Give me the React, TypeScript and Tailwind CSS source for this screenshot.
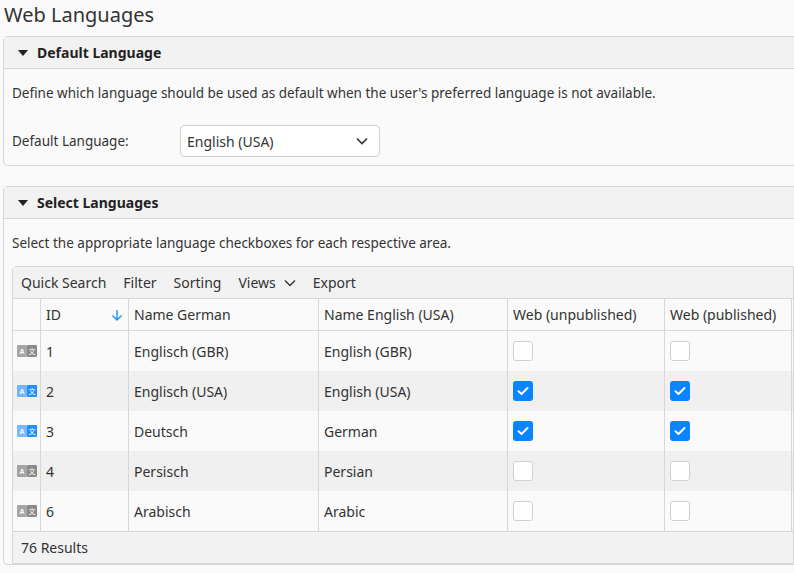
import React from "react";

const rows = [
  { id: "1", de: "Englisch (GBR)", en: "English (GBR)", a: false, b: false },
  { id: "2", de: "Englisch (USA)", en: "English (USA)", a: true, b: true },
  { id: "3", de: "Deutsch", en: "German", a: true, b: true },
  { id: "4", de: "Persisch", en: "Persian", a: false, b: false },
  { id: "6", de: "Arabisch", en: "Arabic", a: false, b: false },
];

function LangIcon({ active }: { active: boolean }) {
  const c = active ? "#1e90ff" : "#8a8a8a";
  return (
    <svg width="20" height="12" viewBox="0 0 20 12">
      <rect x="0" y="0" width="10" height="12" rx="1" fill={c} opacity={active ? 0.6 : 0.75} />
      <rect x="10" y="0" width="10" height="12" rx="1" fill={c} />
      <text x="5" y="9" fontSize="7" fill="white" textAnchor="middle" fontFamily="Liberation Sans" fontWeight="bold">A</text>
      <text x="15" y="9" fontSize="7" fill="white" textAnchor="middle" fontFamily="Noto Sans CJK SC">文</text>
    </svg>
  );
}

function Check({ on }: { on: boolean }) {
  return on ? (
    <div className="w-5 h-5 rounded-[3px] bg-[#0a84ff] flex items-center justify-center">
      <svg width="12" height="10" viewBox="0 0 12 10"><path d="M1.5 5.2 L4.5 8 L10.5 2" stroke="white" strokeWidth="2" fill="none" strokeLinecap="round" strokeLinejoin="round" /></svg>
    </div>
  ) : (
    <div className="w-5 h-5 rounded-[3px] border border-[#d0d0d0] bg-white" />
  );
}

function Tri() {
  return <svg width="10" height="8" viewBox="0 0 10 8"><path d="M0 1 L10 1 L5 7 Z" fill="#222" /></svg>;
}

export default function App() {
  const cell = "border-r border-[#d8d8d8] px-[5px] flex items-center";
  return (
    <div className="w-[794px] h-[573px] overflow-hidden bg-[#fafafa] text-[#333] text-[14px]" style={{ fontFamily: "'Noto Sans', Lato, sans-serif" }}>
      <div className="pl-[4px] pt-[1px] h-[36px] text-[20px] text-[#333] leading-[28px]">Web Languages</div>
      <div className="ml-[3px] w-[800px] border border-[#d6d6d6] rounded-[4px] bg-[#fafafa]">
        <div className="h-[32px] bg-[#f2f2f2] border-b border-[#d6d6d6] flex items-center gap-[9px] pl-[14px] font-bold text-[#222]"><Tri />Default Language</div>
        <div className="px-[8px] pt-[15px] pb-[8px]">
          <div className="h-[18px] leading-[18px] text-[13.5px]">Define which language should be used as default when the user's preferred language is not available.</div>
          <div className="flex items-center mt-[23px]">
            <div className="w-[168px] text-[13.5px]">Default Language:</div>
            <div className="w-[200px] h-[32px] rounded-[5px] border border-[#d0d0d0] bg-white flex items-center justify-between px-[6px] pr-[10px]">
              <span>English (USA)</span>
              <svg width="14" height="10" viewBox="0 0 14 10"><path d="M2 2.5 L7 7.5 L12 2.5" stroke="#333" strokeWidth="1.6" fill="none" /></svg>
            </div>
          </div>
        </div>
      </div>
      <div className="ml-[3px] mt-[20px] w-[800px] border border-[#d6d6d6] rounded-[4px] bg-[#fafafa]">
        <div className="h-[32px] bg-[#f2f2f2] border-b border-[#d6d6d6] flex items-center gap-[9px] pl-[14px] font-bold text-[#222]"><Tri />Select Languages</div>
        <div className="px-[8px] pt-[15px]">
          <div className="h-[18px] leading-[18px] text-[13.5px]">Select the appropriate language checkboxes for each respective area.</div>
          <div className="mt-[14px] border border-[#d6d6d6] rounded-tl-[4px] bg-[#fafafa]">
            <div className="h-[32px] bg-[#f2f2f2] border-b border-[#d6d6d6] flex items-center gap-[17px] pl-[8px]">
              <span>Quick Search</span><span>Filter</span><span>Sorting</span>
              <span className="flex items-center gap-[8px]">Views<svg width="12" height="8" viewBox="0 0 12 8"><path d="M1 1.5 L6 6.5 L11 1.5" stroke="#333" strokeWidth="1.4" fill="none" /></svg></span>
              <span>Export</span>
            </div>
            <div className="grid grid-cols-[28px_88px_190px_189px_157px_127px_1fr]">
              <div className="h-[32px] border-b border-r border-[#d8d8d8]" />
              <div className={`${cell} h-[32px] border-b justify-between`}>ID<svg width="12" height="12" viewBox="0 0 12 12"><path d="M6 1 V11 M1.5 6.5 L6 11 L10.5 6.5" stroke="#1e90ff" strokeWidth="1.4" fill="none" /></svg></div>
              <div className={`${cell} h-[32px] border-b`}>Name German</div>
              <div className={`${cell} h-[32px] border-b`}>Name English (USA)</div>
              <div className={`${cell} h-[32px] border-b`}>Web (unpublished)</div>
              <div className={`${cell} h-[32px] border-b`}>Web (published)</div>
              <div className="h-[32px] border-b border-[#d8d8d8]" />
              {rows.map((r, i) => {
                const bg = i % 2 === 1 ? "bg-[#f0f0f0]" : "bg-[#fafafa]";
                return (
                  <React.Fragment key={r.id}>
                    <div className={`${bg} h-[40px] border-r border-[#d8d8d8] flex items-center justify-center`}><LangIcon active={r.a} /></div>
                    <div className={`${bg} ${cell} h-[40px]`}>{r.id}</div>
                    <div className={`${bg} ${cell} h-[40px]`}>{r.de}</div>
                    <div className={`${bg} ${cell} h-[40px]`}>{r.en}</div>
                    <div className={`${bg} ${cell} h-[40px]`}><Check on={r.a} /></div>
                    <div className={`${bg} ${cell} h-[40px]`}><Check on={r.b} /></div>
                    <div className={`${bg} h-[40px]`} />
                  </React.Fragment>
                );
              })}
            </div>
            <div className="h-[32px] bg-[#f2f2f2] border-t border-[#d6d6d6] flex items-center pl-[8px]">76 Results</div>
          </div>
        </div>
      </div>
    </div>
  );
}
